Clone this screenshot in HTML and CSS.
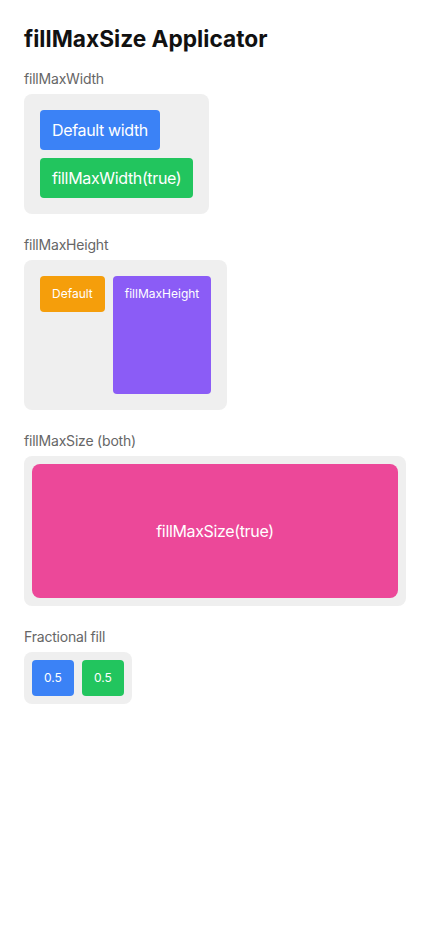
FILE: index.html
```html
<!DOCTYPE html>
<html>
<head>
<meta charset="utf-8">
<link rel="stylesheet" href="styles.css">
</head>
<body>
<main class="page">
  <h1 class="title">fillMaxSize Applicator</h1>

  <section class="section">
    <div class="label">fillMaxWidth</div>
    <div class="box box-col">
      <div class="chip chip-lg blue">Default width</div>
      <div class="chip chip-lg green fill-w">fillMaxWidth(true)</div>
    </div>
  </section>

  <section class="section">
    <div class="label">fillMaxHeight</div>
    <div class="box box-row">
      <div class="chip chip-sm orange">Default</div>
      <div class="chip chip-sm purple fill-h">fillMaxHeight</div>
    </div>
  </section>

  <section class="section">
    <div class="label">fillMaxSize (both)</div>
    <div class="box box-size">
      <div class="chip pink fill-both">fillMaxSize(true)</div>
    </div>
  </section>

  <section class="section">
    <div class="label">Fractional fill</div>
    <div class="box box-frac">
      <div class="chip chip-frac blue">0.5</div>
      <div class="chip chip-frac green">0.5</div>
    </div>
  </section>
</main>
</body>
</html>
```

FILE: styles.css
```css
* { box-sizing: border-box; }
html, body { margin: 0; padding: 0; background: #fff; }
body {
  font-family: Inter, "Noto Sans", "Liberation Sans", sans-serif;
  color: #1a1a1a;
}
.page {
  padding: 24px;
  display: flex;
  flex-direction: column;
  align-items: flex-start;
}
.title {
  margin: 0 0 17px;
  font-size: 22.7px;
  font-weight: 700;
  line-height: 29px;
  color: #111;
}
.section {
  display: flex;
  flex-direction: column;
  align-items: flex-start;
  margin-bottom: 22px;
  align-self: stretch;
}
.label {
  font-size: 14px;
  line-height: 17px;
  color: #666;
  margin-bottom: 7px;
  letter-spacing: -0.2px;
}
.box {
  background: #efefef;
  border-radius: 8px;
}
.box-col {
  padding: 16px;
  display: flex;
  flex-direction: column;
  align-items: flex-start;
  gap: 8px;
}
.box-row {
  padding: 16px;
  display: flex;
  flex-direction: row;
  align-items: flex-start;
  gap: 8px;
  height: 150px;
}
.box-size {
  padding: 8px;
  align-self: stretch;
  height: 150px;
  display: flex;
}
.box-frac {
  padding: 8px;
  display: flex;
  gap: 8px;
}
.chip {
  color: #fff;
  border-radius: 4px;
  white-space: nowrap;
}
.chip-lg {
  font-size: 16px;
  height: 40px;
  line-height: 40px;
  padding: 0 12px;
  letter-spacing: -0.35px;
}
.chip-sm {
  font-size: 12px;
  line-height: 16px;
  padding: 10px 12px;
}
.chip-frac {
  font-size: 12px;
  width: 42px;
  height: 36px;
  line-height: 36px;
  text-align: center;
}
.fill-w { align-self: stretch; }
.fill-h { align-self: stretch; }
.fill-both {
  flex: 1;
  display: flex;
  align-items: center;
  justify-content: center;
  font-size: 16px;
  letter-spacing: -0.35px;
  border-radius: 8px;
}
.blue { background: #3b82f6; }
.green { background: #22c55e; }
.orange { background: #f59e0b; }
.purple { background: #8b5cf6; }
.pink { background: #ec4899; }
```
